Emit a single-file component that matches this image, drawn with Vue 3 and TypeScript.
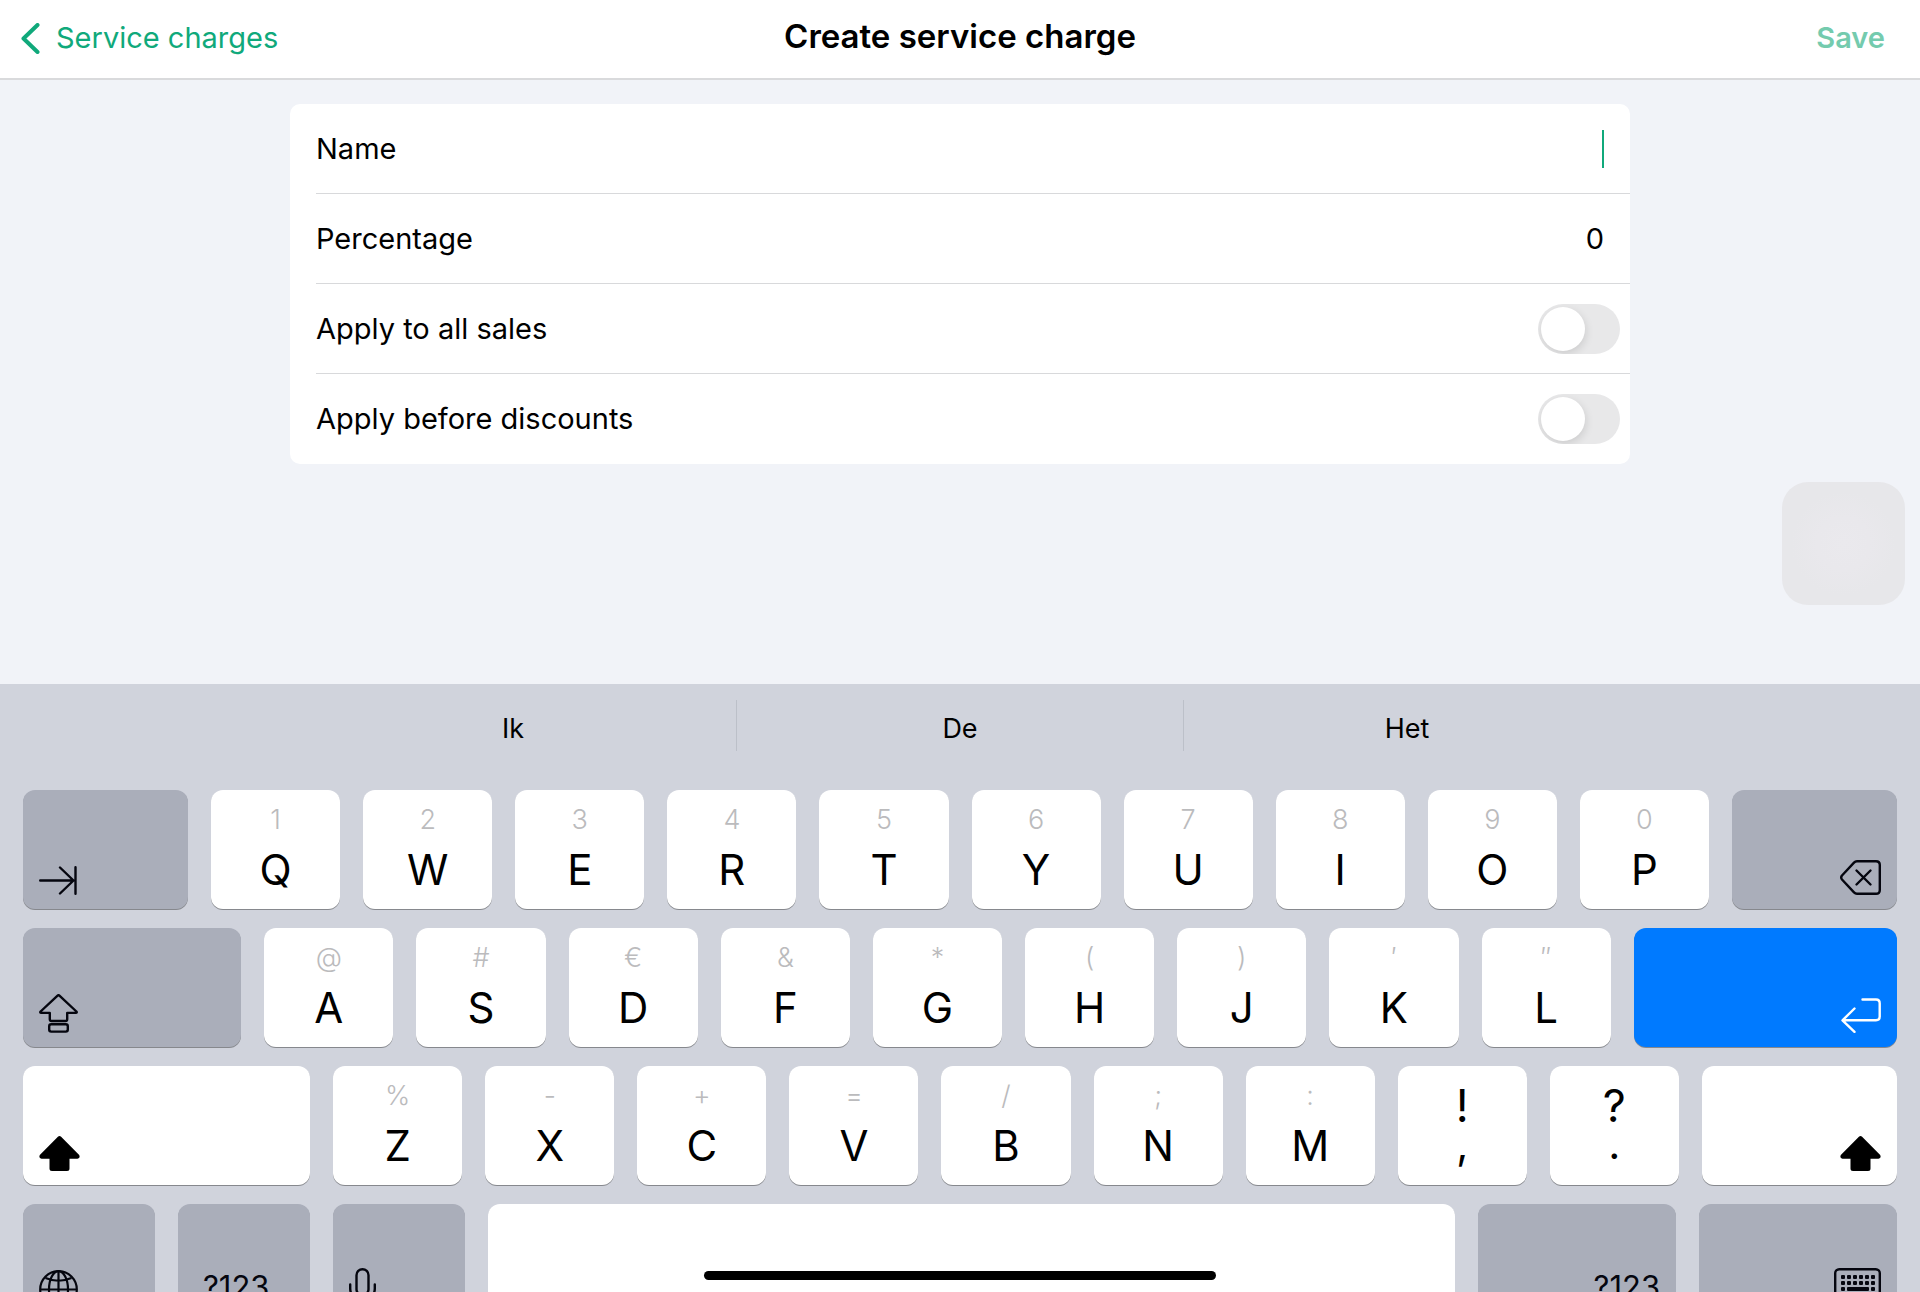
<script setup lang="ts">
import { ref } from 'vue'

interface Key {
  main: string
  alt: string
  dual?: boolean
}

const name = ref('')
const percentage = ref('0')
const applyToAll = ref(false)
const beforeDiscounts = ref(false)

const suggestions: string[] = ['Ik', 'De', 'Het']

const toKeys = (letters: string, alts: string): Key[] =>
  [...letters].map((main, i) => ({ main, alt: [...alts][i] }))

const topRow = toKeys('QWERTYUIOP', '1234567890')
const homeRow = toKeys('ASDFGHJKL', '@#€&*()′″')
const bottomRow: Key[] = [
  ...toKeys('ZXCVBNM', '%-+=/;:'),
  { main: ',', alt: '!', dual: true },
  { main: '.', alt: '?', dual: true },
]
const keyboardDots: number[] = [8, 14, 20, 26, 32, 38]
</script>

<template>
  <div class="screen">
    <header class="navbar">
      <a class="back" href="#">
        <svg width="19" height="31" viewBox="0 0 19 31" fill="none" aria-hidden="true">
          <path d="M16.500 2 2.500 15.500 16.500 29" stroke="currentColor" stroke-width="4" stroke-linecap="round" stroke-linejoin="round" />
        </svg>
        <span>Service charges</span>
      </a>
      <h1 class="title">Create service charge</h1>
      <button class="save" type="button">Save</button>
    </header>

    <main class="content">
      <form class="card" @submit.prevent>
        <div class="row">
          <label for="name">Name</label>
          <span class="entry">
            <input id="name" v-model="name" class="field" type="text" autocomplete="off" />
            <span class="caret"></span>
          </span>
        </div>
        <div class="row">
          <label for="percentage">Percentage</label>
          <span class="entry">
            <input id="percentage" v-model="percentage" class="field" type="text" inputmode="decimal" />
          </span>
        </div>
        <div class="row">
          <label for="all-sales">Apply to all sales</label>
          <input id="all-sales" v-model="applyToAll" class="switch" type="checkbox" role="switch" />
        </div>
        <div class="row">
          <label for="before-discounts">Apply before discounts</label>
          <input id="before-discounts" v-model="beforeDiscounts" class="switch" type="checkbox" role="switch" />
        </div>
      </form>
      <button class="assistive" type="button" aria-label="AssistiveTouch"></button>
    </main>

    <section class="keyboard" aria-label="Keyboard">
      <div class="suggestions">
        <button v-for="word in suggestions" :key="word" class="suggestion" type="button">{{ word }}</button>
      </div>

      <div class="keys">
        <button class="key special left tab" type="button" aria-label="Tab">
          <svg width="38" height="29" viewBox="0 0 38 29" fill="none" stroke="currentColor" stroke-width="2.400" stroke-linecap="round" stroke-linejoin="round" aria-hidden="true">
            <path d="M1.200 14.500H34M21 1.500 34.500 14.500 21 27.500M36.500 1.200V27.800" />
          </svg>
        </button>
        <button v-for="k in topRow" :key="k.main" class="key letter" type="button">
          <span class="alt">{{ k.alt }}</span><span class="glyph">{{ k.main }}</span>
        </button>
        <button class="key special right tab" type="button" aria-label="Delete">
          <svg width="41" height="35" viewBox="0 0 41 35" fill="none" stroke="currentColor" stroke-width="2.400" stroke-linecap="round" stroke-linejoin="round" aria-hidden="true">
            <path d="M17 1.200H36Q39.800 1.200 39.800 5V30Q39.800 33.800 36 33.800H17Q15.300 33.800 14 32.400L2 19.500Q0.400 17.500 2 15.500L14 2.600Q15.300 1.200 17 1.200Z" />
            <path d="M16.500 10.500 30.500 24.500M30.500 10.500 16.500 24.500" />
          </svg>
        </button>
      </div>

      <div class="keys">
        <button class="key special left caps" type="button" aria-label="Caps lock">
          <svg width="39" height="39" viewBox="0 0 39 39" fill="none" stroke="currentColor" stroke-width="2.400" stroke-linejoin="round" aria-hidden="true">
            <path d="M18.300 1.800Q19.500 0.700 20.700 1.800L37.400 17.500Q38.300 18.900 36.800 18.900H28.200V25.200Q28.200 27 26.400 27H12.600Q10.800 27 10.800 25.200V18.900H2.200Q0.700 18.900 1.600 17.500Z" />
            <rect x="10.200" y="30.200" width="18.600" height="7.400" rx="2" />
          </svg>
        </button>
        <button v-for="k in homeRow" :key="k.main" class="key letter" type="button">
          <span class="alt">{{ k.alt }}</span><span class="glyph">{{ k.main }}</span>
        </button>
        <button class="key primary right return" type="button" aria-label="Return">
          <svg width="40" height="35" viewBox="0 0 40 35" fill="none" stroke="currentColor" stroke-width="2.400" stroke-linecap="round" stroke-linejoin="round" aria-hidden="true">
            <path d="M21.500 1.500H35Q38.700 1.500 38.700 5.200V18.600Q38.700 22.300 35 22.300H1.800M13.500 10.500 1.500 22.300 13.500 33.800" />
          </svg>
        </button>
      </div>

      <div class="keys">
        <button class="key left shift-left" type="button" aria-label="Left shift">
          <svg width="41" height="35" viewBox="0 0 41 35" fill="currentColor" aria-hidden="true">
            <path d="M18.900 0.700Q20.500-0.500 22.100 0.700L40.200 19Q41.600 22.400 38.500 22.700H30.500V32.500Q30.500 35 28 35H13Q10.500 35 10.500 32.500V22.700H2.500Q-0.600 22.400 0.800 19Z" />
          </svg>
        </button>
        <button v-for="k in bottomRow" :key="k.main" class="key letter" :class="{ dual: k.dual }" type="button">
          <span class="alt">{{ k.alt }}</span><span class="glyph">{{ k.main }}</span>
        </button>
        <button class="key right shift-right" type="button" aria-label="Right shift">
          <svg width="41" height="35" viewBox="0 0 41 35" fill="currentColor" aria-hidden="true">
            <path d="M18.900 0.700Q20.500-0.500 22.100 0.700L40.200 19Q41.600 22.400 38.500 22.700H30.500V32.500Q30.500 35 28 35H13Q10.500 35 10.500 32.500V22.700H2.500Q-0.600 22.400 0.800 19Z" />
          </svg>
        </button>
      </div>

      <div class="keys last">
        <button class="key special left util" type="button" aria-label="Next keyboard">
          <svg width="39" height="39" viewBox="0 0 39 39" fill="none" stroke="currentColor" stroke-width="2.200" aria-hidden="true">
            <circle cx="19.500" cy="19.500" r="18.300" />
            <ellipse cx="19.500" cy="19.500" rx="9.500" ry="18.300" />
            <path d="M19.500 1.200V37.800M1.200 19.500H37.800M6.500 8Q19.500 13.500 32.500 8M6.500 31Q19.500 25.500 32.500 31" />
          </svg>
        </button>
        <button class="key special left util symbols" type="button"><span>?123</span></button>
        <button class="key special left util" type="button" aria-label="Dictate">
          <svg width="27" height="41" viewBox="0 0 27 41" fill="none" stroke="currentColor" stroke-width="2.400" stroke-linecap="round" aria-hidden="true">
            <rect x="7.500" y="1.200" width="12" height="26" rx="6" />
            <path d="M1.200 16.500V20.500A12.300 12.300 0 0 0 25.800 20.500V16.500M13.500 33V39.500M7 39.500H20" />
          </svg>
        </button>
        <button class="key space" type="button" aria-label="Space"></button>
        <button class="key special right wide" type="button"><span>?123</span></button>
        <button class="key special right wide" type="button" aria-label="Hide keyboard">
          <svg width="47" height="41" viewBox="0 0 47 41" fill="none" aria-hidden="true">
            <rect x="1.200" y="1.200" width="44.600" height="28" rx="4" stroke="currentColor" stroke-width="2.400" />
            <g fill="currentColor">
              <rect v-for="x in keyboardDots" :key="`a${x}`" :x="x - 1" y="7" width="4" height="4" rx="1" />
              <rect v-for="x in keyboardDots" :key="`b${x}`" :x="x - 1" y="13" width="4" height="4" rx="1" />
              <rect x="7" y="19" width="4" height="4" rx="1" />
              <rect x="13" y="19" width="22" height="4" rx="1" />
              <rect x="37" y="19" width="4" height="4" rx="1" />
            </g>
            <path d="M17 34 23.500 39 30 34" stroke="currentColor" stroke-width="2.400" stroke-linecap="round" stroke-linejoin="round" />
          </svg>
        </button>
      </div>
      <div class="home-indicator"></div>
    </section>
  </div>
</template>

<style>
body {
  margin: 0;
}
</style>

<style scoped>
.screen {
  display: flex;
  flex-direction: column;
  min-height: 100vh;
  background: #f1f3f8;
  color: #000;
  font-family: Inter, "Liberation Sans", sans-serif;
  font-size: 29px;
}

button,
input {
  margin: 0;
  padding: 0;
  border: 0;
  background: none;
  color: inherit;
  font: inherit;
}

svg {
  display: block;
  flex: none;
}

.navbar {
  display: grid;
  grid-template-columns: 1fr auto 1fr;
  align-items: center;
  height: 76px;
  padding: 0 21px 2px;
  border-bottom: 2px solid #d9dadc;
  background: #fff;
}

.back {
  display: flex;
  align-items: center;
  justify-self: start;
  gap: 16px;
  color: #10a97b;
  text-decoration: none;
  line-height: 40px;
}

.title {
  margin: 0;
  padding-bottom: 4px;
  font-size: 33px;
  font-weight: 600;
  line-height: 40px;
}

.save {
  justify-self: end;
  margin-right: 14px;
  color: #74cbae;
  font-weight: 600;
  line-height: 40px;
}

.content {
  position: relative;
  flex: 1;
  padding: 24px 24px 160px;
}

.card {
  max-width: 1340px;
  margin: 0 auto;
  border-radius: 10px;
  background: #fff;
}

.row {
  display: flex;
  align-items: center;
  justify-content: space-between;
  height: 89px;
  margin-left: 26px;
  padding-right: 10px;
  border-bottom: 1px solid #d8d9db;
}

.row:last-child {
  border-bottom-color: transparent;
}

.entry {
  display: flex;
  align-items: center;
  flex: 1;
  padding-right: 16px;
}

.field {
  flex: 1;
  min-width: 0;
  height: 48px;
  outline: none;
  text-align: right;
}

.caret {
  width: 2px;
  height: 38px;
  background: #10a97b;
}

.switch {
  appearance: none;
  width: 82px;
  height: 50px;
  padding: 3px;
  box-sizing: border-box;
  border-radius: 25px;
  background: #e8e8e9;
  overflow: hidden;
}

.switch::before {
  content: "";
  display: block;
  width: 44px;
  height: 44px;
  border-radius: 50%;
  background: #fff;
  box-shadow: 1px 3px 8px rgba(0, 0, 0, 0.12);
}

.switch:checked {
  background: #10a97b;
}

.switch:checked::before {
  margin-left: auto;
}

.assistive {
  position: absolute;
  right: 15px;
  bottom: 79px;
  width: 123px;
  height: 123px;
  border-radius: 26px;
  background: radial-gradient(circle, #eae9ed 0, #e9e8ec 30%, #e7e7ea 60%);
}

.keyboard {
  position: relative;
  display: flex;
  flex-direction: column;
  gap: 19px;
  padding: 0 23px;
  background: #d0d3dc;
}

.suggestions {
  display: flex;
  width: 100%;
  max-width: 1341px;
  height: 87px;
  margin: 0 auto;
}

.suggestion {
  position: relative;
  flex: 1;
  padding-top: 2px;
  font-size: 27px;
}

.suggestion + .suggestion::before {
  content: "";
  position: absolute;
  top: 16px;
  left: -1px;
  width: 1px;
  height: 51px;
  background: #bcc0c9;
}

.keys {
  display: flex;
  gap: 23px;
}

.last {
  height: 88px;
  overflow: hidden;
}

.key {
  display: flex;
  flex: 129 1 0;
  min-width: 0;
  height: 119px;
  border-radius: 12px;
  background: #fff;
  box-shadow: 0 1px 0 #86888d;
}

.letter {
  flex-direction: column;
  align-items: center;
  justify-content: flex-start;
  gap: 12px;
}

.alt {
  margin-top: 12px;
  color: #bbbbbd;
  font-size: 27px;
  font-weight: 300;
  line-height: 36px;
}

.glyph {
  font-size: 42px;
  line-height: 40px;
}

.dual {
  gap: 0;
}

.dual .alt {
  margin-top: 20px;
  color: #000;
  font-size: 45px;
  font-weight: 400;
  line-height: 40px;
}

.dual .glyph {
  line-height: 36px;
}

.left,
.right {
  align-items: flex-end;
  font-size: 31px;
  line-height: 44px;
}

.left {
  justify-content: flex-start;
}

.right {
  justify-content: flex-end;
}

.left > *,
.right > * {
  margin: 14px 16px;
}

.special {
  background: #aaaeba;
  color: #05060f;
}

.primary {
  background: #007aff;
  color: #fff;
}

.tab {
  flex-grow: 165;
}

.caps {
  flex-grow: 218;
}

.return {
  flex-grow: 263;
}

.shift-left {
  flex-grow: 287;
}

.shift-right {
  flex-grow: 195;
}

.util {
  flex-grow: 132;
}

.symbols > span {
  margin-left: 25px;
}

.wide {
  flex-grow: 198;
}

.space {
  flex-grow: 968;
}

.home-indicator {
  position: absolute;
  bottom: 12px;
  left: 50%;
  width: 512px;
  height: 9px;
  margin-left: -256px;
  border-radius: 5px;
  background: #000;
}
</style>
